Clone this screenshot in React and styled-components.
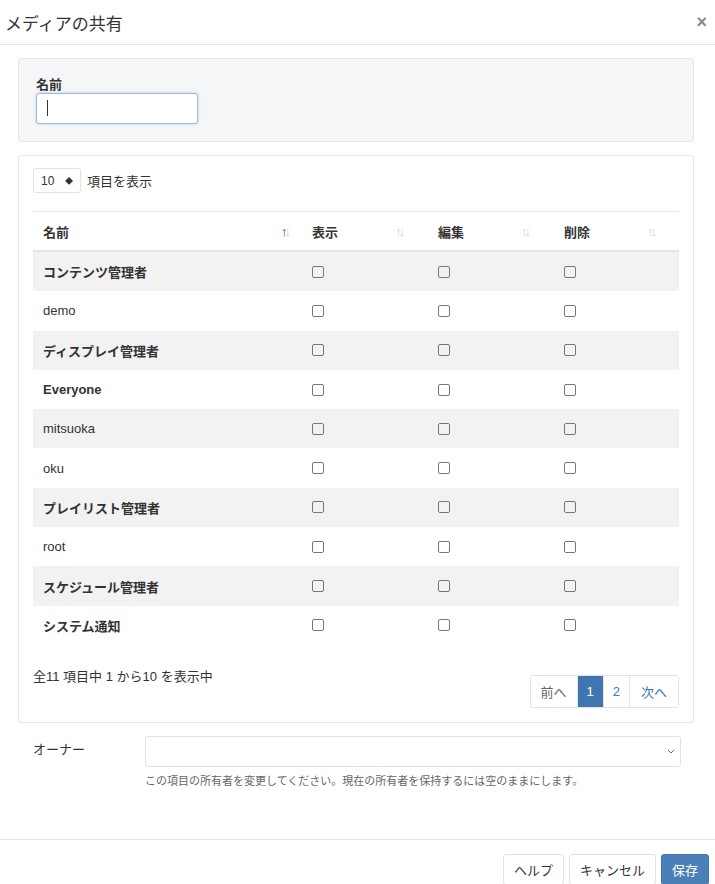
import React from "react";
import styled, { createGlobalStyle } from "styled-components";

const Global = createGlobalStyle`
  body { margin: 0; background: #fff; font-family: "Helvetica Neue", "Liberation Sans", "Noto Sans CJK JP", sans-serif; color: #333; font-size: 13px; }
`;
const Header = styled.div`
  height: 45px; border-bottom: 1px solid #e5e5e5; display: flex; align-items: center;
  justify-content: space-between; padding: 0 8px 0 5px; box-sizing: border-box;
`;
const Title = styled.div` font-size: 17px; color: #333; `;
const Close = styled.div` font-size: 18px; font-weight: bold; color: #888; `;
const Body = styled.div` padding: 13px 21px 0 18px; `;
const Panel = styled.div`
  background: ${p => p.$gray ? "#f5f6f8" : "#fff"}; border: 1px solid #e4e6ea; border-radius: 3px;
  padding: ${p => p.$pad}; margin-bottom: 13px;
`;
const Label = styled.div` font-weight: bold; font-size: 13px; margin-bottom: 1px; line-height: 15px; `;
const Input = styled.div`
  width: 162px; height: 31px; box-sizing: border-box; border: 1px solid #9fb9d9; border-radius: 3px;
  background: #fff; box-shadow: 0 0 3px rgba(80,130,200,.35); padding: 6px 10px;
  &::after { content: ""; display: block; width: 1px; height: 16px; background: #333; }
`;
const Len = styled.div` display: flex; align-items: center; gap: 6px; font-size: 13px; margin-bottom: 18px; `;
const SmallSel = styled.div`
  width: 48px; height: 25px; box-sizing: border-box; border: 1px solid #e2e2e2; border-radius: 3px;
  display: flex; align-items: center; justify-content: space-between; padding: 0 7px; font-size: 12px;
`;
const Grid = styled.div`
  display: grid; grid-template-columns: 269px 126px 126px 126px; box-sizing: border-box;
  height: ${p => p.$h}px; align-items: center;
  background: ${p => p.$odd ? "#f2f2f2" : "#fff"};
  border-top: ${p => p.$head ? "1px solid #e8e8e8" : "none"};
  border-bottom: ${p => p.$head ? "2px solid #e3e6ea" : "none"};
  font-weight: ${p => p.$bold ? "bold" : "normal"};
`;
const Cell = styled.div` padding: 0 10px; display: flex; justify-content: space-between; align-items: center; `;
const Sort = styled.span` font-size: 13px; letter-spacing: -3px; color: #ccc; font-weight: normal; padding-right: 16px; b{color:#333;} `;
const Box = styled.span` display: inline-block; width: 10px; height: 10px; border: 1px solid #777; border-radius: 2px; `;
const Foot = styled.div` display: flex; justify-content: space-between; align-items: flex-start; margin-top: 19px; `;
const Pager = styled.div` display: flex; border: 1px solid #e2e2e2; border-radius: 3px; margin-top: 11px; height: 31px; overflow: hidden;`;
const Pg = styled.div`
  padding: 0 ${p => p.$w}px; display: flex; align-items: center; font-size: 13px;
  color: ${p => p.$active ? "#fff" : p.$muted ? "#666" : "#337ab7"}; background: ${p => p.$active ? "#3f76b0" : "#fff"};
  border-left: ${p => p.$first ? "none" : "1px solid #e6e6e6"};
`;
const OwnerRow = styled.div` display: grid; grid-template-columns: 112px 1fr; padding: 0 13px 0 15px; `;
const OwnerSel = styled.div`
  height: 31px; box-sizing: border-box; border: 1px solid #e2e2e2; border-radius: 3px; display: flex; justify-content: flex-end; align-items: center; padding-right: 4px;
`;
const Help = styled.div` font-size: 11px; color: #666; margin-top: 5px; `;
const Footer = styled.div` margin-top: 51px; border-top: 1px solid #e5e5e5; padding: 14px 6px 0; display: flex; justify-content: flex-end; gap: 5px; `;
const Btn = styled.div`
  height: 31px; box-sizing: border-box; padding: 0 10px; display: flex; align-items: center; border-radius: 3px; font-size: 13px;
  border: 1px solid ${p => p.$primary ? "#3f76b0" : "#e2e2e2"}; background: ${p => p.$primary ? "#4a7fb8" : "#fff"}; color: ${p => p.$primary ? "#fff" : "#333"};
`;

const rows = [
  ["コンテンツ管理者", true], ["demo", false], ["ディスプレイ管理者", true], ["Everyone", true], ["mitsuoka", false],
  ["oku", false], ["プレイリスト管理者", true], ["root", false], ["スケジュール管理者", true], ["システム通知", true],
];

export default function App() {
  return (
    <>
      <Global />
      <Header><Title>メディアの共有</Title><Close>×</Close></Header>
      <Body>
        <Panel $gray $pad="18px 17px 17px">
          <Label>名前</Label>
          <Input />
        </Panel>
        <Panel $pad="12px 14px 14px 14px">
          <Len><SmallSel><span>10</span><span style={{ fontSize: 8 }}>◆</span></SmallSel>項目を表示</Len>
          <Grid $head $h={41}>
            <Cell><b>名前</b><Sort style={{ paddingRight: 4 }}><b>↑</b>↓</Sort></Cell>
            <Cell><b>表示</b><Sort>↑↓</Sort></Cell>
            <Cell><b>編集</b><Sort>↑↓</Sort></Cell>
            <Cell><b>削除</b><Sort>↑↓</Sort></Cell>
          </Grid>
          {rows.map(([n, b], i) => (
            <Grid key={n} $h={39.3} $odd={i % 2 === 0} $bold={b}>
              <Cell>{n}</Cell><Cell><Box /></Cell><Cell><Box /></Cell><Cell><Box /></Cell>
            </Grid>
          ))}
          <Foot>
            <span style={{ marginTop: 2 }}>全11 項目中 1 から10 を表示中</span>
            <Pager>
              <Pg $first $muted $w={10}>前へ</Pg><Pg $active $w={9}>1</Pg><Pg $w={9}>2</Pg><Pg $w={11}>次へ</Pg>
            </Pager>
          </Foot>
        </Panel>
        <OwnerRow>
          <div style={{ paddingTop: 3 }}>オーナー</div>
          <div>
            <OwnerSel><svg width="10" height="10" viewBox="0 0 10 10"><path d="M2 4l3 3 3-3" stroke="#666" fill="none" /></svg></OwnerSel>
            <Help>この項目の所有者を変更してください。現在の所有者を保持するには空のままにします。</Help>
          </div>
        </OwnerRow>
      </Body>
      <Footer><Btn>ヘルプ</Btn><Btn>キャンセル</Btn><Btn $primary>保存</Btn></Footer>
    </>
  );
}
